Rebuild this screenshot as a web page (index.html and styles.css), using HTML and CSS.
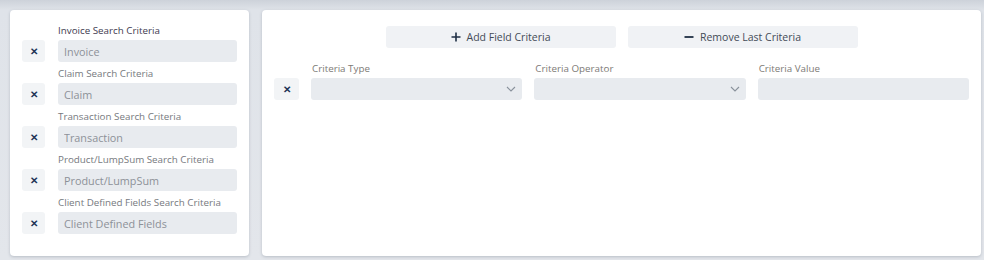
FILE: index.html
```html
<!DOCTYPE html>
<html>
<head>
<meta charset="utf-8" />
<title>Search Criteria</title>
<link rel="stylesheet" href="styles.css">
</head>
<body>
	<div class="page">
		<div class="card side">
			<div class="field">
				<label class="on">Invoice Search Criteria</label>
				<div class="row">
					<a href="javascript:;" class="del">&#x2715;</a>
					<input type="text" class="txt" placeholder="Invoice" />
				</div>
			</div>
			<div class="field">
				<label>Claim Search Criteria</label>
				<div class="row">
					<a href="javascript:;" class="del">&#x2715;</a>
					<input type="text" class="txt" placeholder="Claim" />
				</div>
			</div>
			<div class="field">
				<label>Transaction Search Criteria</label>
				<div class="row">
					<a href="javascript:;" class="del">&#x2715;</a>
					<input type="text" class="txt" placeholder="Transaction" />
				</div>
			</div>
			<div class="field">
				<label>Product/LumpSum Search Criteria</label>
				<div class="row">
					<a href="javascript:;" class="del">&#x2715;</a>
					<input type="text" class="txt" placeholder="Product/LumpSum" />
				</div>
			</div>
			<div class="field">
				<label>Client Defined Fields Search Criteria</label>
				<div class="row">
					<a href="javascript:;" class="del">&#x2715;</a>
					<input type="text" class="txt" placeholder="Client Defined Fields" />
				</div>
			</div>
		</div>

		<div class="card main">
			<div class="tools">
				<a href="javascript:;" class="btn"><svg class="ico" width="10" height="10" viewBox="0 0 10 10"><path d="M5 0.5v9M0.5 5h9" stroke="#1f2f45" stroke-width="1.6"/></svg>Add Field Criteria</a>
				<a href="javascript:;" class="btn"><svg class="ico" width="10" height="10" viewBox="0 0 10 10"><path d="M0.5 5h9" stroke="#1f2f45" stroke-width="1.8"/></svg>Remove Last Criteria</a>
			</div>
			<div class="crit">
				<a href="javascript:;" class="del">&#x2715;</a>
				<div class="col">
					<label>Criteria Type</label>
					<div class="sel"><svg width="10" height="6" viewBox="0 0 10 6"><path d="M1 1l4 4 4-4" fill="none" stroke="#8a929c" stroke-width="1.1"/></svg></div>
				</div>
				<div class="col">
					<label>Criteria Operator</label>
					<div class="sel"><svg width="10" height="6" viewBox="0 0 10 6"><path d="M1 1l4 4 4-4" fill="none" stroke="#8a929c" stroke-width="1.1"/></svg></div>
				</div>
				<div class="col">
					<label>Criteria Value</label>
					<input type="text" class="txt" />
				</div>
			</div>
		</div>
	</div>
</body>
</html>
```

FILE: styles.css
```css
*{ padding:0; margin:0; box-sizing:border-box; }
body{ background:linear-gradient(#cdd2da 0, #dfe3e9 10px, #e3e6eb 100%); font-family:'Open Sans', 'Noto Sans', sans-serif; height:260px; overflow:hidden; }
.page{ display:flex; gap:13px; padding:10px 3px 0 10px; }

.card{ background:#fff; border-radius:4px; box-shadow:0 1px 3px rgba(60,70,90,0.25); height:246px; }
.side{ width:239px; padding:14px 12px 0 12px; }
.main{ flex:1; padding:16px 12px 0 12px; }

label{ display:block; font-size:9.8px; line-height:14px; color:#76797e; white-space:nowrap; }
.side label{ padding-left:36px; height:14px; margin-bottom:2px; }
.side label.on{ color:#3e3b50; }
.field{ margin-bottom:5px; }

.row{ display:flex; gap:13px; }
.del{ display:flex; align-items:center; justify-content:center; width:23px; height:22px; background:#f2f4f6; border-radius:3px; color:#1f3557; font-size:10px; font-weight:bold; text-decoration:none; flex:none; }
.txt{ display:block; width:100%; height:22px; border:none; outline:none; background:#e8ebef; border-radius:3px; padding:0 6px; font-family:inherit; font-size:10.8px; color:#444; }
.txt::placeholder{ color:#8d9198; }
.side .txt{ width:180px; }

.tools{ display:flex; justify-content:center; gap:12px; }
.btn{ display:flex; align-items:center; justify-content:center; width:230px; height:22px; background:#f0f2f5; border-radius:3px; color:#434b57; font-size:10.5px; text-decoration:none; }
.ico{ margin-right:6px; }

.crit{ display:flex; gap:12px; margin-top:14px; }
.crit .del{ width:25px; margin-top:16px; }
.col{ flex:1; }
.col label{ padding-left:1px; height:14px; margin-bottom:2px; color:#7d7a76; }
.sel{ height:22px; background:#e8ebef; border-radius:3px; display:flex; align-items:center; justify-content:flex-end; padding-right:6px; }
```
